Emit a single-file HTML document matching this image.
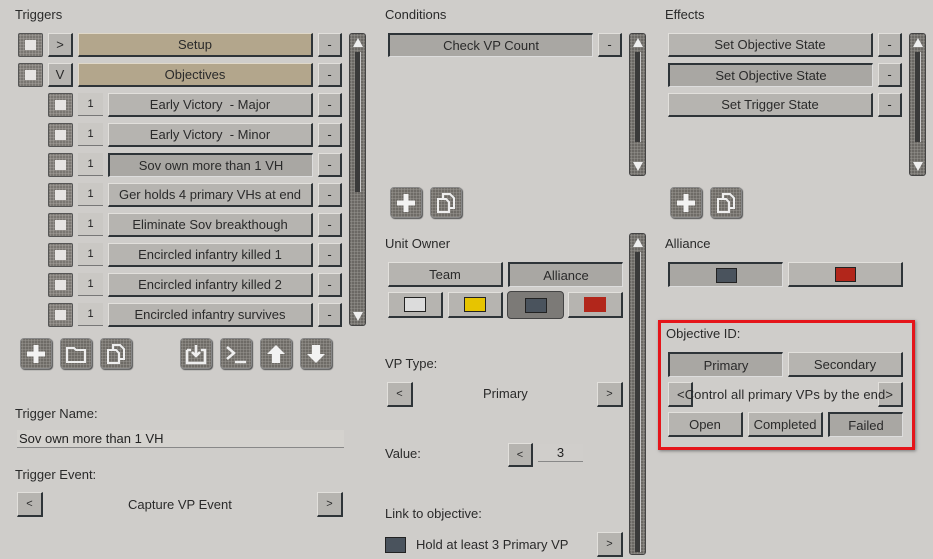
<!DOCTYPE html>
<html><head><meta charset="utf-8"><style>
*{box-sizing:border-box;margin:0;padding:0}
body{width:933px;height:559px;background:#cfcdca;font-family:"Liberation Sans",sans-serif;font-size:13px;color:#222;position:relative;overflow:hidden}
.a{position:absolute}
.lbl{position:absolute;font-size:13px;color:#2a2a2a;white-space:nowrap}
.b{position:absolute;background:#b6b4b0;border-right:2px solid #2e3438;border-bottom:2px solid #2e3438;border-top:1px solid #e2e0dc;border-left:1px solid #e2e0dc;text-align:center;font-size:13px;color:#2a2a2a;display:flex;align-items:center;justify-content:center;white-space:nowrap}
.p{background:#a9a7a3;border:2px solid #2e3438;border-right:1px solid #ddd;border-bottom:1px solid #ddd}
.t{background:#b3a68c;border-top:1px solid #e0d8c8;border-left:1px solid #e0d8c8}
.cb{position:absolute;width:25px;height:24px;background:#6d6a66;background-image:radial-gradient(#9a9792 1px,transparent 1.5px);background-size:3px 3px;border:1px solid #555;border-radius:2px}
.cb::after{content:"";position:absolute;left:6px;top:6px;width:11px;height:10px;background:#e6e4e2}
.num{position:absolute;width:25px;height:23px;background:#cac8c4;border-bottom:1px solid #777;font-size:11px;display:flex;align-items:center;justify-content:center}
.sb{position:absolute;width:17px;background:#5f5c58;background-image:radial-gradient(#8d8a86 1px,transparent 1.5px);background-size:3px 3px;border:1px solid #444;border-radius:3px}
.sb .th{position:absolute;left:5px;top:18px;width:6px;background:#3a3a3a;border-right:1px solid #ccc}
.sb .u,.sb .d{position:absolute;left:3px;width:0;height:0;border-left:5px solid transparent;border-right:5px solid transparent}
.sb .u{top:4px;border-bottom:9px solid #eee}
.sb .d{bottom:4px;border-top:9px solid #eee}
.ib{position:absolute;width:32px;height:31px;background:#625f5b;background-image:radial-gradient(#8f8c87 1px,transparent 1.5px);background-size:3px 3px;border:1px solid #888;border-radius:4px;box-shadow:1px 1px 1px #555}
.ib svg{position:absolute;left:3px;top:3px}
.sw{display:inline-block;border:1px solid #222}
</style></head><body>

<div class="lbl" style="left:15px;top:7px">Triggers</div>
<div class="lbl" style="left:385px;top:7px">Conditions</div>
<div class="lbl" style="left:665px;top:7px">Effects</div>

<div class="cb" style="left:18px;top:33px"></div>
<div class="b" style="left:48px;top:33px;width:25px;height:24px">&gt;</div>
<div class="b t" style="left:78px;top:33px;width:235px;height:24px">Setup</div>
<div class="b" style="left:318px;top:33px;width:24px;height:24px">-</div>
<div class="cb" style="left:18px;top:63px"></div>
<div class="b" style="left:48px;top:63px;width:25px;height:24px">V</div>
<div class="b t" style="left:78px;top:63px;width:235px;height:24px">Objectives</div>
<div class="b" style="left:318px;top:63px;width:24px;height:24px">-</div>

<div class="cb" style="left:48px;top:93px"></div><div class="num" style="left:78px;top:93px">1</div><div class="b" style="left:108px;top:93px;width:205px;height:24px">Early Victory &nbsp;- Major</div><div class="b" style="left:318px;top:93px;width:24px;height:24px">-</div>
<div class="cb" style="left:48px;top:123px"></div><div class="num" style="left:78px;top:123px">1</div><div class="b" style="left:108px;top:123px;width:205px;height:24px">Early Victory &nbsp;- Minor</div><div class="b" style="left:318px;top:123px;width:24px;height:24px">-</div>
<div class="cb" style="left:48px;top:153px"></div><div class="num" style="left:78px;top:153px">1</div><div class="b p" style="left:108px;top:153px;width:205px;height:24px">Sov own more than 1 VH</div><div class="b" style="left:318px;top:153px;width:24px;height:24px">-</div>
<div class="cb" style="left:48px;top:183px"></div><div class="num" style="left:78px;top:183px">1</div><div class="b" style="left:108px;top:183px;width:205px;height:24px">Ger holds 4 primary VHs at end</div><div class="b" style="left:318px;top:183px;width:24px;height:24px">-</div>
<div class="cb" style="left:48px;top:213px"></div><div class="num" style="left:78px;top:213px">1</div><div class="b" style="left:108px;top:213px;width:205px;height:24px">Eliminate Sov breakthough</div><div class="b" style="left:318px;top:213px;width:24px;height:24px">-</div>
<div class="cb" style="left:48px;top:243px"></div><div class="num" style="left:78px;top:243px">1</div><div class="b" style="left:108px;top:243px;width:205px;height:24px">Encircled infantry killed 1</div><div class="b" style="left:318px;top:243px;width:24px;height:24px">-</div>
<div class="cb" style="left:48px;top:273px"></div><div class="num" style="left:78px;top:273px">1</div><div class="b" style="left:108px;top:273px;width:205px;height:24px">Encircled infantry killed 2</div><div class="b" style="left:318px;top:273px;width:24px;height:24px">-</div>
<div class="cb" style="left:48px;top:303px"></div><div class="num" style="left:78px;top:303px">1</div><div class="b" style="left:108px;top:303px;width:205px;height:24px">Encircled infantry survives</div><div class="b" style="left:318px;top:303px;width:24px;height:24px">-</div>

<div class="sb" style="left:349px;top:33px;height:293px"><div class="u"></div><div class="th" style="height:140px"></div><div class="d"></div></div>

<div class="ib" style="left:20px;top:338px"><svg width="24" height="24"><path d="M12 3v18M3 12h18" stroke="#f2f2f2" stroke-width="5"/></svg></div>
<div class="ib" style="left:60px;top:338px"><svg width="24" height="24"><path d="M3 6h7l2 2h9v12H3z" fill="none" stroke="#eee" stroke-width="2"/></svg></div>
<div class="ib" style="left:100px;top:338px"><svg width="24" height="24"><path d="M4 8h8l3 3v10H4z M9 8V3h7l4 4v10h-5" fill="none" stroke="#eee" stroke-width="2"/></svg></div>
<div class="ib" style="left:180px;top:338px"><svg width="24" height="24"><path d="M3 8h4M17 8h4v13H3V8M12 3v11M8 10l4 4 4-4" fill="none" stroke="#eee" stroke-width="2.5"/></svg></div>
<div class="ib" style="left:220px;top:338px"><svg width="24" height="24"><path d="M3 5l7 6-7 6M11 20h11" fill="none" stroke="#eee" stroke-width="2.5"/></svg></div>
<div class="ib" style="left:260px;top:338px"><svg width="24" height="24"><path d="M12 3l9 9h-5v9H8v-9H3z" fill="#f2f2f2"/></svg></div>
<div class="ib" style="left:300px;top:338px"><svg width="24" height="24"><path d="M12 21l9-9h-5V3H8v9H3z" fill="#f2f2f2"/></svg></div>

<div class="lbl" style="left:15px;top:406px">Trigger Name:</div>
<div class="a" style="left:17px;top:430px;width:327px;height:18px;background:#d4d2ce;border-bottom:1px solid #888;font-size:13px;padding-left:2px;line-height:17px">Sov own more than 1 VH</div>
<div class="lbl" style="left:15px;top:467px">Trigger Event:</div>
<div class="b" style="left:17px;top:492px;width:26px;height:25px;font-size:11px">&lt;</div>
<div class="lbl" style="left:128px;top:497px">Capture VP Event</div>
<div class="b" style="left:317px;top:492px;width:26px;height:25px;font-size:11px">&gt;</div>

<div class="b p" style="left:388px;top:33px;width:205px;height:24px">Check VP Count</div>
<div class="b" style="left:598px;top:33px;width:24px;height:24px">-</div>
<div class="sb" style="left:629px;top:33px;height:143px"><div class="u"></div><div class="th" style="height:90px"></div><div class="d"></div></div>
<div class="ib" style="left:390px;top:187px"><svg width="24" height="24"><path d="M12 3v18M3 12h18" stroke="#f2f2f2" stroke-width="5"/></svg></div>
<div class="ib" style="left:430px;top:187px"><svg width="24" height="24"><path d="M4 8h8l3 3v10H4z M9 8V3h7l4 4v10h-5" fill="none" stroke="#eee" stroke-width="2"/></svg></div>
<div class="lbl" style="left:385px;top:236px">Unit Owner</div>
<div class="b" style="left:388px;top:262px;width:115px;height:25px">Team</div>
<div class="b p" style="left:508px;top:262px;width:115px;height:25px">Alliance</div>
<div class="b" style="left:388px;top:292px;width:55px;height:26px"><span class="sw" style="width:22px;height:15px;background:#dcdcdc"></span></div>
<div class="b" style="left:448px;top:292px;width:55px;height:26px"><span class="sw" style="width:22px;height:15px;background:#e7c400"></span></div>
<div class="b" style="left:507px;top:291px;width:57px;height:28px;background:#7c7a77;border:1px solid #444;border-radius:4px"><span class="sw" style="width:22px;height:15px;background:#4a535d"></span></div>
<div class="b" style="left:568px;top:292px;width:55px;height:26px"><span class="sw" style="width:22px;height:15px;background:#b2261b;border-color:#b2261b"></span></div>
<div class="sb" style="left:629px;top:233px;height:322px"><div class="u"></div><div class="th" style="height:300px"></div></div>
<div class="lbl" style="left:385px;top:356px">VP Type:</div>
<div class="b" style="left:387px;top:382px;width:26px;height:25px;font-size:11px">&lt;</div>
<div class="lbl" style="left:483px;top:386px">Primary</div>
<div class="b" style="left:597px;top:382px;width:26px;height:25px;font-size:11px">&gt;</div>
<div class="lbl" style="left:385px;top:446px">Value:</div>
<div class="b" style="left:508px;top:443px;width:25px;height:24px;font-size:11px">&lt;</div>
<div class="a" style="left:538px;top:444px;width:45px;height:18px;background:#d0cecb;border-bottom:1px solid #888;text-align:center;font-size:13px;line-height:18px">3</div>
<div class="lbl" style="left:385px;top:506px">Link to objective:</div>
<div class="a" style="left:385px;top:537px;width:21px;height:16px;background:#4a535d;border:1px solid #222"></div>
<div class="lbl" style="left:416px;top:537px">Hold at least 3 Primary VP</div>
<div class="b" style="left:597px;top:532px;width:26px;height:25px;font-size:11px">&gt;</div>

<div class="b" style="left:668px;top:33px;width:205px;height:24px">Set Objective State</div>
<div class="b" style="left:878px;top:33px;width:24px;height:24px">-</div>
<div class="b p" style="left:668px;top:63px;width:205px;height:24px">Set Objective State</div>
<div class="b" style="left:878px;top:63px;width:24px;height:24px">-</div>
<div class="b" style="left:668px;top:93px;width:205px;height:24px">Set Trigger State</div>
<div class="b" style="left:878px;top:93px;width:24px;height:24px">-</div>
<div class="sb" style="left:909px;top:33px;height:143px"><div class="u"></div><div class="th" style="height:90px"></div><div class="d"></div></div>
<div class="ib" style="left:670px;top:187px"><svg width="24" height="24"><path d="M12 3v18M3 12h18" stroke="#f2f2f2" stroke-width="5"/></svg></div>
<div class="ib" style="left:710px;top:187px"><svg width="24" height="24"><path d="M4 8h8l3 3v10H4z M9 8V3h7l4 4v10h-5" fill="none" stroke="#eee" stroke-width="2"/></svg></div>
<div class="lbl" style="left:665px;top:236px">Alliance</div>
<div class="b p" style="left:668px;top:262px;width:115px;height:25px"><span class="sw" style="width:21px;height:15px;background:#4a535d"></span></div>
<div class="b" style="left:788px;top:262px;width:115px;height:25px"><span class="sw" style="width:21px;height:15px;background:#b2261b"></span></div>

<div class="a" style="left:658px;top:320px;width:257px;height:130px;border:3px solid #e5151a;box-shadow:1px 1px 3px #777"></div>
<div class="lbl" style="left:666px;top:326px">Objective ID:</div>
<div class="b p" style="left:668px;top:352px;width:115px;height:25px">Primary</div>
<div class="b" style="left:788px;top:352px;width:115px;height:25px">Secondary</div>
<div class="b" style="left:668px;top:382px;width:25px;height:25px"></div>
<div class="b" style="left:878px;top:382px;width:25px;height:25px"></div>
<div class="lbl" style="left:677px;top:387px;letter-spacing:0.1px">&lt;Control all primary VPs by the end&gt;</div>
<div class="b" style="left:668px;top:412px;width:75px;height:25px">Open</div>
<div class="b" style="left:748px;top:412px;width:75px;height:25px">Completed</div>
<div class="b p" style="left:828px;top:412px;width:75px;height:25px">Failed</div>
</body></html>
